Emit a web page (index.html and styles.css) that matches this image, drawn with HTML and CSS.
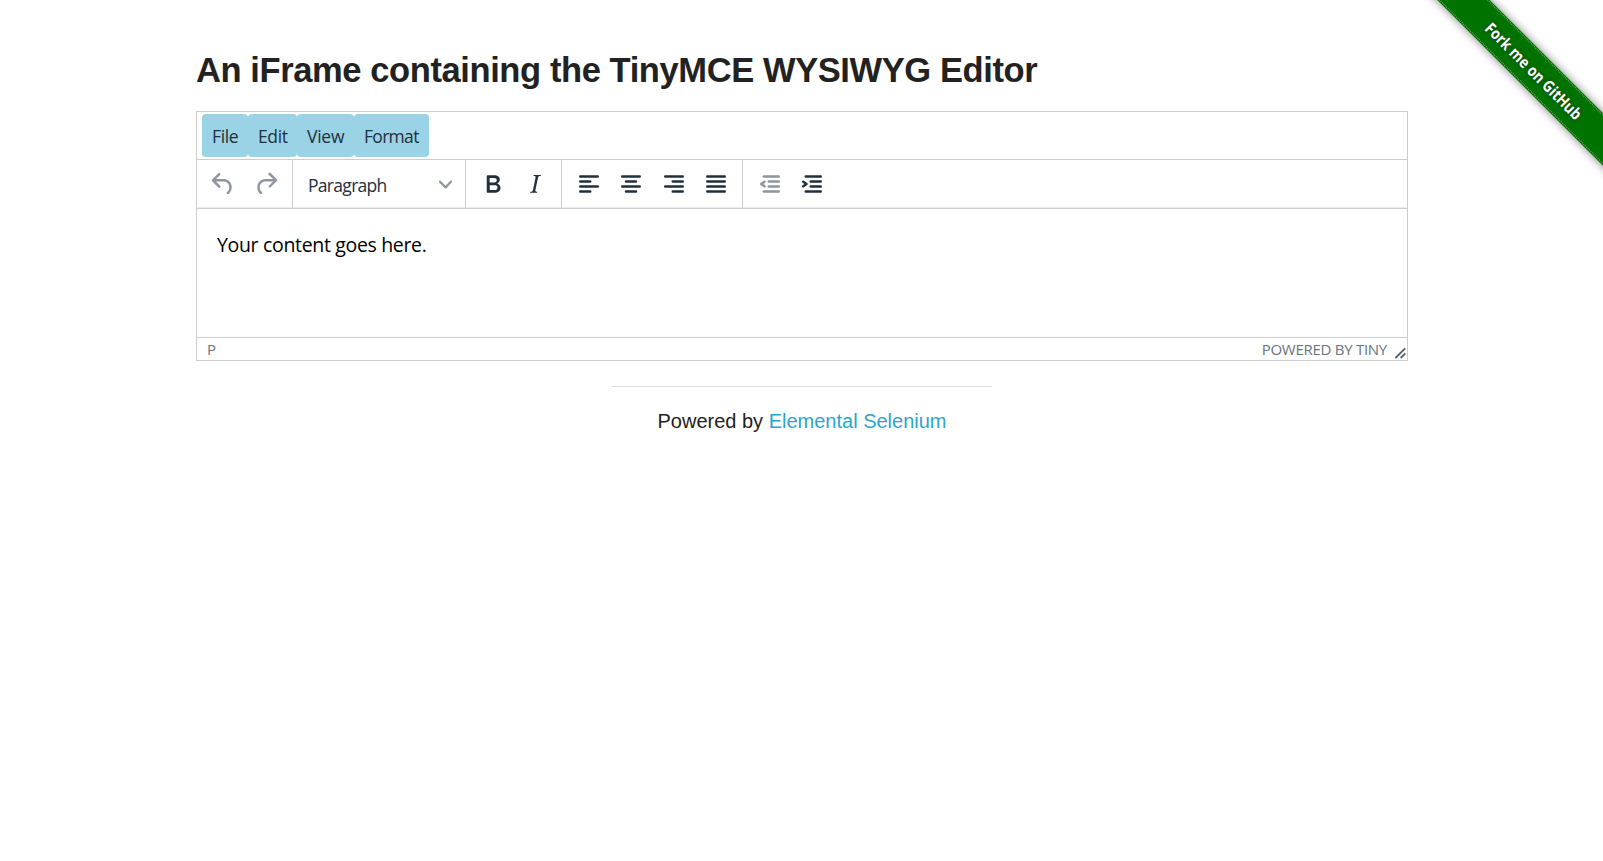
FILE: index.html
```
<!DOCTYPE html>
<html lang="en">
<head>
<meta charset="utf-8">
<title>The Internet</title>
<link rel="stylesheet" href="styles.css">
</head>
<body>
<div class="ribbon"><span>Fork me on GitHub</span></div>
<main class="content">
  <h3 class="title"><span>An iFrame containing the TinyMCE WYSIWYG Editor</span></h3>
  <div class="editor">
    <div class="menubar">
      <button class="menu file"><span>File</span></button>
      <button class="menu edit"><span>Edit</span></button>
      <button class="menu view"><span>View</span></button>
      <button class="menu format"><span>Format</span></button>
    </div>
    <div class="toolbar">
      <div class="group">
        <div class="tool off"><svg viewBox="0 0 24 24"><path d="M6.4 8H12c3.7 0 6.2 2 6.8 5.1.6 2.7-.4 5.6-2.3 6.8a1 1 0 0 1-1-1.8c1.1-.6 1.8-2.7 1.4-4.6-.5-2.1-2.1-3.5-4.9-3.5H6.4l3.3 3.3a1 1 0 1 1-1.4 1.4l-5-5a1 1 0 0 1 0-1.4l5-5a1 1 0 0 1 1.4 1.4L6.4 8Z"/></svg></div>
        <div class="tool off"><svg viewBox="0 0 24 24"><path d="M17.6 10H12c-2.8 0-4.4 1.4-4.9 3.5-.4 2 .3 4 1.4 4.6a1 1 0 1 1-1 1.8c-2-1.2-2.9-4.1-2.3-6.8.6-3 3-5.1 6.8-5.1h5.6l-3.3-3.3a1 1 0 1 1 1.4-1.4l5 5a1 1 0 0 1 0 1.4l-5 5a1 1 0 0 1-1.4-1.4l3.3-3.3Z"/></svg></div>
      </div>
      <div class="group">
        <div class="select"><span>Paragraph</span><svg class="chevron" viewBox="0 0 10 10"><path d="M8.7 2.2c.3-.3.8-.3 1 0 .4.4.4.9 0 1.2L5.7 7.8c-.3.3-.9.3-1.2 0L.2 3.4a.8.8 0 0 1 0-1.2c.3-.3.8-.3 1.1 0L5 6l3.7-3.8Z"/></svg></div>
      </div>
      <div class="group marks">
        <div class="tool"><svg viewBox="0 0 24 24"><path fill-rule="evenodd" d="M7.8 19c-.3 0-.5 0-.6-.2l-.2-.5V5.7c0-.2 0-.4.2-.5l.6-.2h5c1.5 0 2.7.3 3.5 1 .7.6 1.1 1.4 1.1 2.5a3 3 0 0 1-.6 1.9c-.4.6-1 1-1.6 1.2.4.1.9.3 1.3.6s.8.7 1 1.2c.4.4.5 1 .5 1.6 0 1.3-.4 2.3-1.3 3-.8.7-2.1 1-3.8 1H7.8Zm5-8.3c.6 0 1.2-.1 1.6-.5.4-.3.6-.7.6-1.3 0-1.1-.8-1.7-2.3-1.7H9.3v3.5h3.4Zm.5 6c.7 0 1.3-.1 1.7-.4.4-.4.6-.9.6-1.5s-.2-1-.7-1.4c-.4-.3-1-.4-2-.4H9.4v3.8h4Z"/></svg></div>
        <div class="tool"><svg viewBox="0 0 24 24"><path d="m16.7 4.7-.1.9h-.3c-.6 0-1 0-1.4.3-.3.3-.4.6-.5 1.1l-2.1 9.8v.6c0 .5.4.8 1.4.8h.2l-.2.8H8l.2-.8h.2c1.1 0 1.8-.5 2-1.5l2-9.8.1-.5c0-.6-.4-.8-1.4-.8h-.3l.2-.9h5.8Z"/></svg></div>
      </div>
      <div class="group marks">
        <div class="tool lines"><svg viewBox="0 0 24 24"><path d="M5 6h14M5 10h8M5 14h14M5 18h8"/></svg></div>
        <div class="tool lines"><svg viewBox="0 0 24 24"><path d="M5 6h14M8 10h8M5 14h14M8 18h8"/></svg></div>
        <div class="tool lines"><svg viewBox="0 0 24 24"><path d="M5 6h14M11 10h8M5 14h14M11 18h8"/></svg></div>
        <div class="tool lines"><svg viewBox="0 0 24 24"><path d="M5 6h14M5 10h14M5 14h14M5 18h14"/></svg></div>
      </div>
      <div class="group marks last">
        <div class="tool lines off"><svg viewBox="0 0 24 24"><path d="M7 6h12M11 10h8M11 14h8M7 18h12M7.6 10.2 5 12l2.6 1.8"/></svg></div>
        <div class="tool lines"><svg viewBox="0 0 24 24"><path d="M7 6h12M11 10h8M11 14h8M7 18h12M5 10.2 7.6 12 5 13.8"/></svg></div>
      </div>
    </div>
    <div class="page"><p><span>Your content goes here.</span></p></div>
    <div class="status">
      <span class="path">P</span>
      <span class="brand">POWERED BY TINY</span>
      <svg class="grip" viewBox="0 0 12 12"><path d="M1 10.5 9.6 1.8M6.2 10.5 9.8 6.8"/></svg>
    </div>
  </div>
</main>
<footer class="footer">
  <hr>
  <div class="credit">Powered by <a>Elemental Selenium</a></div>
</footer>
</body>
</html>
```
FILE: styles.css
```
* { box-sizing: border-box; }
body {
  margin: 0;
  height: 861px;
  overflow: hidden;
  position: relative;
  background: #fff;
  color: #222;
  font-family: "Liberation Sans", Arial, sans-serif;
}
.content { width: 1212px; margin-left: 196px; padding-top: 46px; }
.title {
  margin: 0;
  height: 65px;
  font-size: 34.5px;
  letter-spacing: -0.4px;
  line-height: 48px;
  font-weight: 700;
  white-space: nowrap;
}
.editor {
  height: 250px;
  border: 1px solid #ccc;
  display: flex;
  flex-direction: column;
  font-family: "Open Sans", "Noto Sans", sans-serif;
  color: #222f3e;
}
.menubar {
  height: 48px;
  padding: 2px 5px;
  display: flex;
  border-bottom: 1px solid #ccc;
}
.menu {
  height: 43px;
  padding: 1px 0 0 10px;
  border: 0;
  border-radius: 4px;
  background: #99d3e5;
  color: #222f3e;
  font: 17.5px/40px "Open Sans", "Noto Sans", sans-serif;
  letter-spacing: -0.6px;
  text-align: left;
  white-space: nowrap;
}
.file { width: 46px; letter-spacing: -0.35px; }
.edit { width: 49px; letter-spacing: -0.35px; }
.view { width: 57px; letter-spacing: -0.25px; }
.format { width: 75px; letter-spacing: -0.7px; }
.toolbar { height: 49px; display: flex; border-bottom: 1px solid #ccc; box-shadow: inset 0 -1px #eee; }
.group { display: flex; align-items: center; padding: 0 5px; border-right: 1px solid #ccc; }
.group.marks { padding: 0 4.3px 0 5.7px; }
.group.last { border: 0; }
.tool { width: 42.5px; display: flex; justify-content: center; }
.tool svg { width: 30px; height: 30px; fill: #222f3e; }
.tool.off svg { fill: #222f3e; opacity: .5; }
.lines svg, .lines.off svg { fill: none; stroke: #222f3e; stroke-width: 2; stroke-linecap: round; stroke-linejoin: round; }
.select {
  width: 162px;
  padding: 2px 8px 0 10px;
  display: flex;
  align-items: center;
  justify-content: space-between;
  font-size: 17.5px;
  letter-spacing: -0.7px;
}
.chevron { width: 13px; height: 13px; margin-top: -1px; fill: #222f3e; opacity: .5; }
.page { flex: none; height: 128px; padding: 20px 20px 0; color: #000; font-size: 19.5px; letter-spacing: -0.33px; line-height: 32px; }
.page p { margin: 0; }
.status {
  flex: none;
  height: 23px;
  border-top: 1px solid #ccc;
  padding: 0 0 0 10px;
  display: flex;
  align-items: center;
  color: #6b747e;
  font-size: 15px;
  letter-spacing: -0.5px;
  line-height: 20px;
  white-space: nowrap;
}
.path, .brand { padding-bottom: 1px; }
.brand { margin-left: auto; letter-spacing: -0.27px; }
.grip { width: 12px; height: 12px; margin: 8px 0 0 8px; fill: none; stroke: #57616d; stroke-width: 1.8; stroke-linecap: round; }
.footer { width: 380px; margin: 25px 0 0 612px; text-align: center; }
.footer hr { margin: 0; border: 0; height: 1px; background: #ddd; }
.credit { margin-top: 18px; font-size: 20px; line-height: 32px; white-space: nowrap; }
.credit a { color: #2ba6cb; }
.ribbon {
  position: absolute;
  left: 1384px;
  top: 52px;
  width: 300px;
  height: 37px;
  display: flex;
  align-items: center;
  justify-content: center;
  background: #007200;
  color: #fff;
  font: 700 16px/20px "Open Sans", "Noto Sans", sans-serif;
  text-shadow: 0 0 4px #003800;
  white-space: nowrap;
  transform: rotate(45deg);
  box-shadow: 0 0 10px rgba(0, 0, 0, .5);
}
.ribbon span { transform: scaleX(.86); }
.ribbon::after {
  content: "";
  position: absolute;
  inset: 1px 0;
  border: dotted #72b372;
  border-width: 1px 0;
}
```
